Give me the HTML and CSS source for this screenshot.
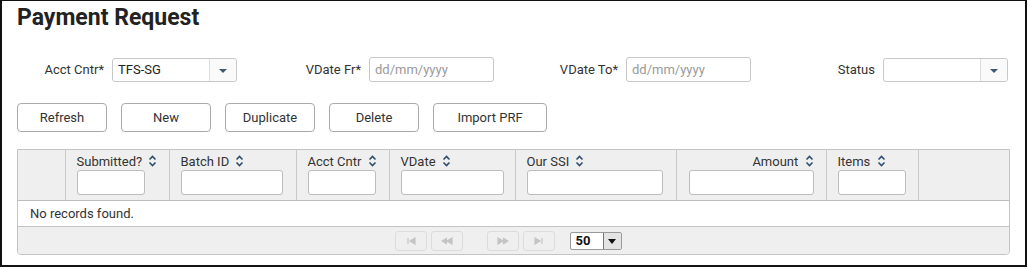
FILE: index.html
```html
<!DOCTYPE html>
<html lang="en">
<head>
  <meta charset="UTF-8">
  <link rel="stylesheet" href="styles.css">
  <title>Payment Request</title>
</head>
<body>
  <div class="frame">
    <h1 class="title">Payment Request</h1>

    <div class="filters">
      <div class="field">
        <label>Acct Cntr*</label>
        <div class="select">
          <span class="select-value">TFS-SG</span>
          <span class="select-btn"><i class="caret"></i></span>
        </div>
      </div>
      <div class="field">
        <label>VDate Fr*</label>
        <input class="text-input" type="text" placeholder="dd/mm/yyyy">
      </div>
      <div class="field">
        <label>VDate To*</label>
        <input class="text-input" type="text" placeholder="dd/mm/yyyy">
      </div>
      <div class="field">
        <label>Status</label>
        <div class="select">
          <span class="select-value"></span>
          <span class="select-btn"><i class="caret"></i></span>
        </div>
      </div>
    </div>

    <div class="actions">
      <button class="btn">Refresh</button>
      <button class="btn">New</button>
      <button class="btn">Duplicate</button>
      <button class="btn">Delete</button>
      <button class="btn btn-wide">Import PRF</button>
    </div>

    <div class="grid">
      <table class="grid-table">
        <colgroup>
          <col style="width:47px"><col style="width:104px"><col style="width:127px">
          <col style="width:93px"><col style="width:126px"><col style="width:161px">
          <col style="width:150px"><col style="width:92px"><col>
        </colgroup>
        <thead>
          <tr>
            <th></th>
            <th><span class="th-label">Submitted? <svg class="sort" viewBox="0 0 9 12"><path d="M1.5 4.5 L4.5 1.5 L7.5 4.5 M1.5 7.5 L4.5 10.5 L7.5 7.5"/></svg></span><input class="filter w68"></th>
            <th><span class="th-label">Batch ID <svg class="sort" viewBox="0 0 9 12"><path d="M1.5 4.5 L4.5 1.5 L7.5 4.5 M1.5 7.5 L4.5 10.5 L7.5 7.5"/></svg></span><input class="filter w102"></th>
            <th><span class="th-label">Acct Cntr <svg class="sort" viewBox="0 0 9 12"><path d="M1.5 4.5 L4.5 1.5 L7.5 4.5 M1.5 7.5 L4.5 10.5 L7.5 7.5"/></svg></span><input class="filter w68"></th>
            <th><span class="th-label">VDate <svg class="sort" viewBox="0 0 9 12"><path d="M1.5 4.5 L4.5 1.5 L7.5 4.5 M1.5 7.5 L4.5 10.5 L7.5 7.5"/></svg></span><input class="filter w103"></th>
            <th><span class="th-label">Our SSI <svg class="sort" viewBox="0 0 9 12"><path d="M1.5 4.5 L4.5 1.5 L7.5 4.5 M1.5 7.5 L4.5 10.5 L7.5 7.5"/></svg></span><input class="filter w136"></th>
            <th class="right"><span class="th-label">Amount <svg class="sort" viewBox="0 0 9 12"><path d="M1.5 4.5 L4.5 1.5 L7.5 4.5 M1.5 7.5 L4.5 10.5 L7.5 7.5"/></svg></span><input class="filter w125"></th>
            <th><span class="th-label">Items <svg class="sort" viewBox="0 0 9 12"><path d="M1.5 4.5 L4.5 1.5 L7.5 4.5 M1.5 7.5 L4.5 10.5 L7.5 7.5"/></svg></span><input class="filter w68"></th>
            <th></th>
          </tr>
        </thead>
        <tbody>
          <tr>
            <td colspan="9" class="empty">No records found.</td>
          </tr>
        </tbody>
      </table>
      <div class="pager">
        <span class="pg-btn"><svg viewBox="0 0 12 8"><path d="M3 1 V7 M10 1 L5 4 L10 7 Z"/></svg></span>
        <span class="pg-btn"><svg viewBox="0 0 12 8"><path d="M6 1 L1 4 L6 7 M11 1 L6 4 L11 7 Z"/></svg></span>
        <span class="pg-gap"></span>
        <span class="pg-btn"><svg viewBox="0 0 12 8"><path d="M1 1 L6 4 L1 7 Z M6 1 L11 4 L6 7"/></svg></span>
        <span class="pg-btn"><svg viewBox="0 0 12 8"><path d="M2 1 L7 4 L2 7 Z M9 1 V7"/></svg></span>
        <span class="rows">
          <span class="rows-value">50</span>
          <span class="rows-btn"><i class="rows-caret"></i></span>
        </span>
      </div>
    </div>
  </div>
</body>
</html>
```

FILE: styles.css
```css
body {
  margin: 0;
  background-color: #fff;
  font-family: Roboto, 'Liberation Sans', sans-serif;
  color: #333;
}

.frame {
  box-sizing: border-box;
  width: 1027px;
  height: 267px;
  border: 2px solid #111;
  border-top-width: 1px;
}

.title {
  margin: 0;
  padding: 4px 0 0 15px;
  font-size: 23px;
  line-height: 26px;
  font-weight: 700;
  color: #222;
}

.filters {
  display: flex;
  gap: 29px;
  padding-left: 7px;
  margin-top: 25px;
}

.field {
  display: flex;
  align-items: center;
  width: 228px;
}

.field label {
  flex: 1;
  text-align: right;
  padding-right: 8px;
  font-size: 13px;
}

.select {
  box-sizing: border-box;
  display: flex;
  width: 125px;
  height: 24px;
  border: 1px solid #c8c8c8;
  border-radius: 3px;
  background-color: #fff;
  margin-top: 2px;
}

.select-value {
  flex: 1;
  padding-left: 5px;
  font-size: 13px;
  line-height: 22px;
  color: #222;
}

.select-btn {
  width: 26px;
  border-left: 1px solid #dcdcdc;
  display: flex;
  align-items: center;
  justify-content: center;
  background-color: #fafafa;
  border-radius: 0 3px 3px 0;
}

.caret {
  width: 0;
  height: 0;
  border-left: 4px solid transparent;
  border-right: 4px solid transparent;
  border-top: 4px solid #3b5877;
  margin-top: 2px;
}

.text-input {
  box-sizing: border-box;
  width: 125px;
  height: 25px;
  border: 1px solid #c8c8c8;
  border-radius: 3px;
  padding: 0 5px;
  font-family: Roboto, 'Liberation Sans', sans-serif;
  font-size: 13px;
}

.text-input::placeholder {
  color: #9a9a9a;
}

.actions {
  display: flex;
  gap: 14px;
  padding-left: 15px;
  margin-top: 21px;
}

.btn {
  box-sizing: border-box;
  width: 90px;
  height: 29px;
  border: 1px solid #aaa;
  border-radius: 4px;
  background-color: #fff;
  font-family: Roboto, 'Liberation Sans', sans-serif;
  font-size: 13px;
  color: #333;
}

.btn-wide {
  width: 114px;
}

.grid {
  width: 993px;
  margin: 17px 0 0 15px;
  border: 1px solid #c4c4c4;
  border-radius: 0 0 4px 4px;
  box-sizing: border-box;
}

.grid-table {
  width: 100%;
  border-collapse: collapse;
  table-layout: fixed;
}

.grid-table th {
  padding: 4px 12px 5px 11px;
  background-color: #efefef;
  border-left: 1px solid #c8c8c8;
  border-bottom: 1px solid #bdbdbd;
  text-align: left;
  vertical-align: top;
  font-weight: 400;
  font-size: 13px;
}

.grid-table th:first-child {
  border-left: none;
}

.grid-table th.right {
  text-align: right;
}

.th-label {
  display: block;
  height: 15px;
  line-height: 15px;
  white-space: nowrap;
}

.sort {
  width: 9px;
  height: 12px;
  margin-left: 3px;
  vertical-align: -1px;
  fill: none;
  stroke: #2f4d70;
  stroke-width: 1.6;
}

.filter {
  display: block;
  box-sizing: border-box;
  height: 25px;
  margin: 1px 0 0;
  border: 1px solid #bdbdbd;
  border-radius: 3px;
  background-color: #fff;
}

.grid-table th.right .filter {
  margin-left: auto;
}

.w68 { width: 68px; }
.w102 { width: 102px; }
.w103 { width: 103px; }
.w125 { width: 125px; }
.w136 { width: 136px; }

.empty {
  height: 25px;
  padding: 0 12px;
  font-size: 13px;
  background-color: #fff;
  border-bottom: 1px solid #c4c4c4;
}

.pager {
  display: flex;
  align-items: center;
  justify-content: center;
  gap: 4px;
  height: 27px;
  background-color: #efefef;
  border-radius: 0 0 4px 4px;
  padding-right: 11px;
}

.pg-btn {
  box-sizing: border-box;
  display: flex;
  align-items: center;
  justify-content: center;
  width: 32px;
  height: 20px;
  border: 1px solid #dcdcdc;
  border-radius: 3px;
}

.pg-btn svg {
  width: 12px;
  height: 8px;
  fill: #c4c4c4;
  stroke: #c4c4c4;
  stroke-width: 1.2;
}

.pg-gap {
  width: 16px;
}

.rows {
  display: flex;
  box-sizing: border-box;
  width: 52px;
  height: 18px;
  margin-left: 11px;
  border: 1px solid #999;
  border-radius: 2px;
  background-color: #fff;
}

.rows-value {
  flex: 1;
  padding-left: 5px;
  font-size: 13px;
  font-weight: 700;
  line-height: 16px;
  color: #111;
}

.rows-btn {
  width: 17px;
  display: flex;
  align-items: center;
  justify-content: center;
  border-left: 1px solid #777;
  background-color: #e4e4e4;
}

.rows-caret {
  width: 0;
  height: 0;
  border-left: 4px solid transparent;
  border-right: 4px solid transparent;
  border-top: 5px solid #111;
  margin-top: 2px;
}
```
